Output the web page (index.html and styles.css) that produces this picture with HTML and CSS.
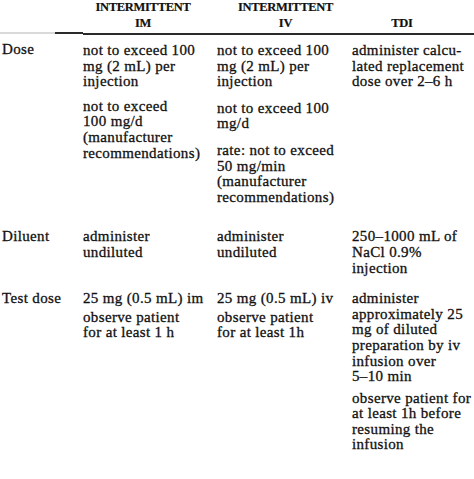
FILE: index.html
```html
<!DOCTYPE html>
<html>
<head>
<meta charset="utf-8">
<link rel="stylesheet" href="styles.css">
</head>
<body>
<table class="dosing">
  <colgroup>
    <col class="c-label">
    <col class="c-im">
    <col class="c-iv">
    <col class="c-tdi">
  </colgroup>
  <thead>
    <tr>
      <th class="h-blank"></th>
      <th class="h-im">INTERMITTENT<br>IM</th>
      <th class="h-iv">INTERMITTENT<br>IV</th>
      <th class="h-tdi"><br>TDI</th>
    </tr>
  </thead>
  <tbody>
    <tr class="row-dose">
      <td class="label">Dose</td>
      <td class="gap-m">
        <p>not to exceed 100<br>mg (2&nbsp;mL) per<br>injection</p>
        <p>not to exceed<br>100 mg/d<br>(manufacturer<br>recommendations)</p>
      </td>
      <td class="gap-l">
        <p>not to exceed 100<br>mg (2&nbsp;mL) per<br>injection</p>
        <p>not to exceed 100<br>mg/d</p>
        <p>rate: not to exceed<br>50 mg/min<br>(manufacturer<br>recommendations)</p>
      </td>
      <td>
        <p>administer calcu-<br>lated replacement<br>dose over 2–6&nbsp;h</p>
      </td>
    </tr>
    <tr class="row-diluent">
      <td class="label">Diluent</td>
      <td><p>administer<br>undiluted</p></td>
      <td><p>administer<br>undiluted</p></td>
      <td><p>250–1000 mL of<br>NaCl&nbsp;0.9%<br>injection</p></td>
    </tr>
    <tr class="row-test">
      <td class="label">Test dose</td>
      <td class="gap-s">
        <p>25 mg (0.5 mL) im</p>
        <p>observe patient<br>for at least 1 h</p>
      </td>
      <td class="gap-s">
        <p>25 mg (0.5 mL) iv</p>
        <p>observe patient<br>for at least 1h</p>
      </td>
      <td class="gap-t">
        <p>administer<br>approximately 25<br>mg of diluted<br>preparation by iv<br>infusion over<br>5–10 min</p>
        <p>observe patient for<br>at least 1h before<br>resuming the<br>infusion</p>
      </td>
    </tr>
  </tbody>
</table>
</body>
</html>
```

FILE: styles.css
```css
html, body {
  margin: 0;
  padding: 0;
  background: #fff;
}

body {
  font-family: "Liberation Serif", "Times New Roman", serif;
  color: #111;
}

.dosing {
  table-layout: fixed;
  border-collapse: collapse;
  width: 474px;
  margin-top: -1px;
}

.c-label { width: 83px; }
.c-im { width: 134px; }
.c-iv { width: 135px; }
.c-tdi { width: 122px; }

.dosing th {
  font-size: 12.5px;
  font-weight: bold;
  letter-spacing: -0.3px;
  line-height: 16px;
  text-align: center;
  vertical-align: bottom;
  padding: 0 0 2px 0;
  white-space: nowrap;
  border-bottom: 2px solid #2a2a2a;
  -webkit-text-stroke: 0.2px #111;
}

.dosing th.h-im { padding-right: 14px; }
.dosing th.h-iv { padding-left: 2px; }
.dosing th.h-tdi { padding-right: 22px; }

.dosing th.h-blank {
  border-bottom: 0;
  background: linear-gradient(to right, #d9d9d9 0 55px, #2a2a2a 55px) left bottom / 100% 2px no-repeat;
}

.dosing td {
  font-size: 15px;
  letter-spacing: 0.35px;
  line-height: 15.6px;
  vertical-align: top;
  text-align: left;
  white-space: nowrap;
  padding: 0;
  -webkit-text-stroke: 0.3px #111;
}

.dosing td.label {
  padding-left: 2px;
}

.row-dose td {
  padding-top: 8px;
  padding-bottom: 24px;
}

.row-diluent td {
  padding-bottom: 15px;
}

.dosing p {
  margin: 0 0 8px;
}

.dosing .gap-s p { margin-bottom: 3px; }
.dosing .gap-m p { margin-bottom: 9px; }
.dosing .gap-l p { margin-bottom: 11px; }
.dosing .gap-t p { margin-bottom: 6px; }

.dosing td p:last-child {
  margin-bottom: 0;
}
```
